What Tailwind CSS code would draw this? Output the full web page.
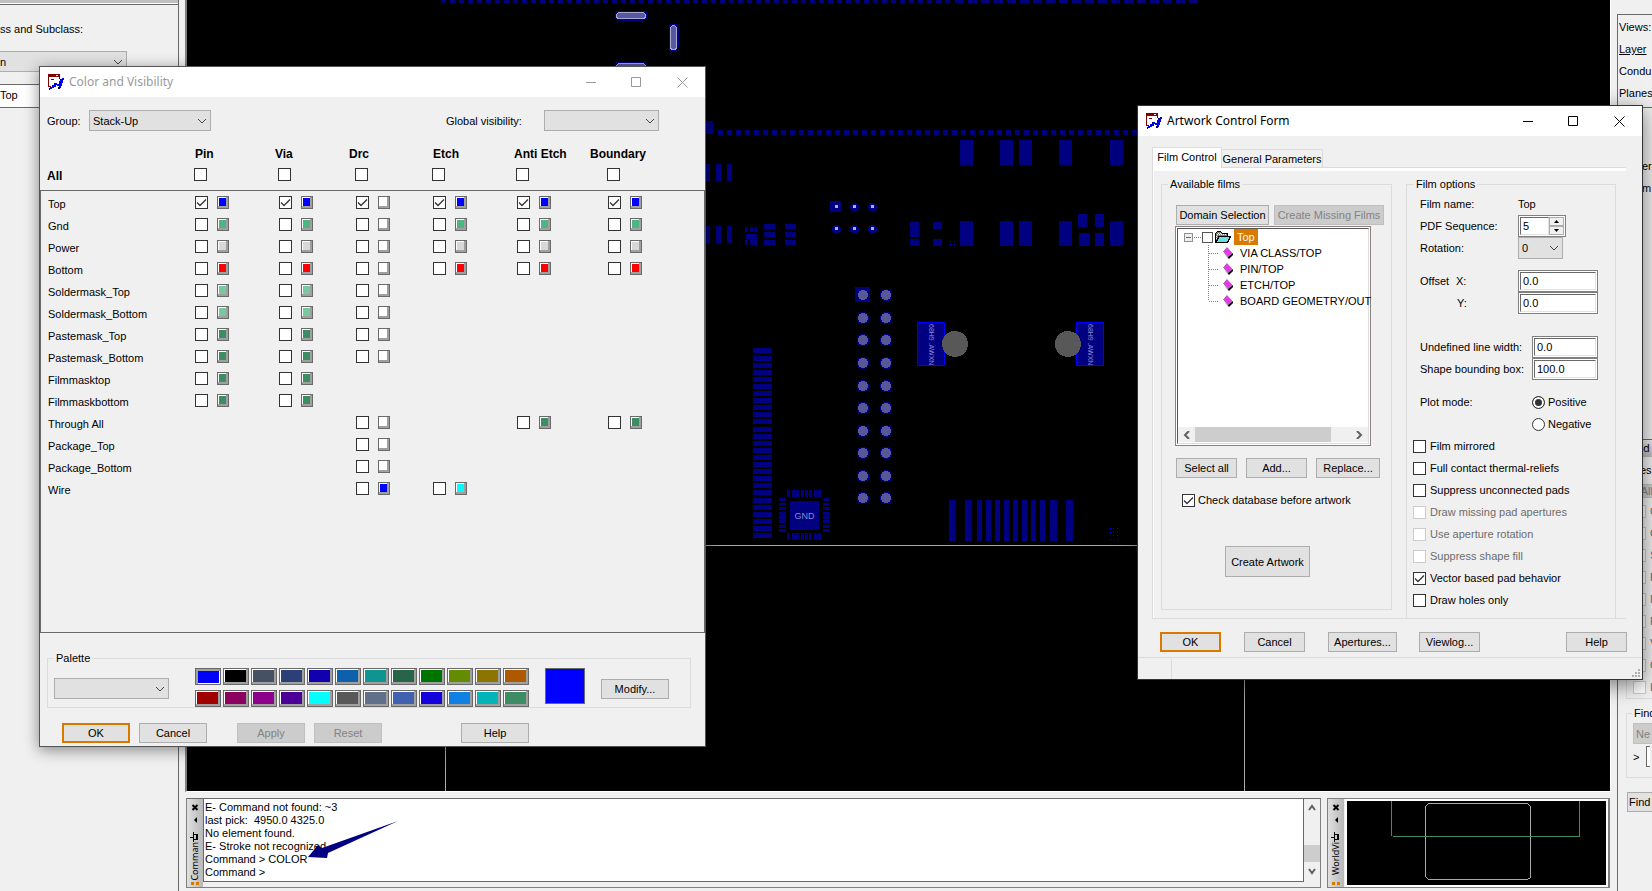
<!DOCTYPE html>
<html lang="en">
<head>
<meta charset="utf-8">
<meta name="viewport" content="width=device-width, initial-scale=1">
<title>PCB Editor</title>
<script src="https://cdn.jsdelivr.net/npm/@tailwindcss/browser@4"></script>
</head>
<body class="relative flex h-screen overflow-hidden whitespace-nowrap bg-[#f0f0f0] font-['Liberation_Sans',sans-serif] text-[11px] leading-[14px] text-black">

<!-- Options panel -->
<aside class="flex w-[179px] shrink-0 flex-col border-r border-[#696969]">
  <div class="h-[4px] border-b border-white bg-[#c0c0c0]"></div>
  <div class="border-t border-[#696969] pt-[17px]">
    <label for="cls" class="block">ss and Subclass:</label>
    <div class="relative mt-[15px] w-[127px]">
      <select id="cls" class="h-[21px] w-full appearance-none border border-l-0 border-[#adadad] bg-[#e1e1e1] text-black"><option>n</option></select>
      <svg class="pointer-events-none absolute right-1 top-[7px] h-2 w-[10px]" viewBox="0 0 10 8" fill="none" stroke="#444"><path d="M1 2l4 4 4-4"/></svg>
    </div>
    <div class="mt-3 h-6 border-y border-[#696969] bg-white pt-[3px]">Top</div>
  </div>
</aside>

<main class="flex min-w-0 flex-1 flex-col">
  <!-- Design canvas -->
  <section class="mx-[6px] min-h-0 flex-1 border-b border-l-2 border-r border-b-white border-l-[#808080] border-r-white bg-black">
    <svg id="board" class="block h-full w-full" viewBox="187 0 1423 791" preserveAspectRatio="xMinYMin slice" shape-rendering="crispEdges" fill="#000080"></svg>
  </section>

  <div class="flex h-[99px] shrink-0 gap-[6px] px-[7px] pb-[3px] pt-[6px]">
    <!-- Command panel -->
    <section class="flex min-w-0 flex-1 border border-[#808080] border-t-[#696969] bg-[#f0f0f0]">
      <div class="flex w-4 shrink-0 flex-col items-center bg-linear-to-r from-[#e0e0e0] to-[#b8b8b8] pt-[5px]">
        <svg class="h-[38px] w-[14px] shrink-0" viewBox="0 0 14 38" fill="none" stroke="#000"><path stroke-width="2" d="M4.500 1l5 5M9.500 1l-5 5"/><path fill="#000" stroke="none" d="M9 13v6l-3-3z"/><path shape-rendering="crispEdges" d="M5 30.500h5M5 35.500h5M9.500 30v6M8.500 30v6M5.500 28v10M2 33.500h3"/></svg>
        <div class="rotate-180 font-['Noto_Sans'] text-[9px] leading-3 [writing-mode:vertical-rl]">Comman</div>
        <svg class="mb-[2px] mt-auto h-[3px] w-2 shrink-0" viewBox="0 0 8 3" fill="#d97900"><path d="M0 0h3v3H0zM5 0h3v3H5z"/></svg>
      </div>
      <div class="mb-[5px] min-w-0 flex-1 border border-t-0 border-[#696969] bg-white pl-px pt-[2px] leading-[13px]">
        <p>E- Command not found: ~3</p>
        <p>last pick: &nbsp;4950.0 4325.0</p>
        <p>No element found.</p>
        <p>E- Stroke not recognized.</p>
        <p>Command &gt; COLOR</p>
        <p>Command &gt;</p>
      </div>
      <div class="flex w-4 flex-col items-center pb-3 pt-[5px]">
        <svg class="h-[7px] w-2" viewBox="0 0 8 7" fill="none" stroke="#606060" stroke-width="2"><path d="M1 6l3-4 3 4"/></svg>
        <span class="mb-[6px] mt-auto h-[17px] w-full bg-[#cdcdcd]"></span>
        <svg class="h-[7px] w-2" viewBox="0 0 8 7" fill="none" stroke="#606060" stroke-width="2"><path d="M1 1l3 4 3-4"/></svg>
      </div>
    </section>
    <!-- WorldView panel -->
    <section class="flex w-[283px] shrink-0 border border-r-2 border-[#808080]">
      <div class="flex w-[17px] shrink-0 flex-col items-center border-r border-[#f0f0f0] bg-linear-to-r from-[#e0e0e0] to-[#b8b8b8] pt-[5px]">
        <svg class="h-[38px] w-[14px] shrink-0" viewBox="0 0 14 38" fill="none" stroke="#000"><path stroke-width="2" d="M4.500 1l5 5M9.500 1l-5 5"/><path fill="#000" stroke="none" d="M9 13v6l-3-3z"/><path shape-rendering="crispEdges" d="M5 30.500h5M5 35.500h5M9.500 30v6M8.500 30v6M5.500 28v10M2 33.500h3"/></svg>
        <div class="rotate-180 font-['Noto_Sans'] text-[9px] leading-3 [writing-mode:vertical-rl]">WorldVi</div>
        <svg class="mb-[2px] mt-auto h-[3px] w-2 shrink-0" viewBox="0 0 8 3" fill="#d97900"><path d="M0 0h3v3H0zM5 0h3v3H5z"/></svg>
      </div>
      <div class="min-w-0 flex-1 border-2 border-white bg-black">
        <svg class="block h-full w-full" viewBox="1348 801 261 84" preserveAspectRatio="xMinYMin slice" fill="none" shape-rendering="crispEdges"><path stroke="#a8a8a8" d="M1429.500 803.500h99l3 3v71l-3 2h-99l-3-3v-70z"/><path stroke="#3c8c64" d="M1392.500 801v35M1394 836.500h187M1580.500 801v35"/></svg>
      </div>
    </section>
  </div>
</main>

<!-- Visibility and Find panels -->
<aside class="flex w-[35px] shrink-0 flex-col">
  <div class="mt-[14px] h-[94px] border-b border-l border-t border-[#696969] pl-px pt-px leading-[22px]">
    <p>Views:</p><p><a href="#" class="underline">Layer</a></p><p>Condu</p><p>Planes</p>
  </div>
  <div class="flex-1 border-l border-[#696969]">
    <div class="pl-6 pt-[47px] leading-[22px]"><p>er</p><p>m</p></div>
    <div class="mt-[240px] border-t border-[#696969]">
      <div class="h-[17px] bg-linear-to-b from-[#f0f0f0] to-[#b8b8b8] pl-[25px] font-['Noto_Sans'] leading-4 text-black">d</div>
      <p class="mt-[6px] pl-[22px]">es</p>
      <button disabled class="ml-[15px] mt-[7px] block h-[14px] w-5 border border-r-0 border-[#bfbfbf] bg-[#ccc] text-right leading-3 text-[#838383]">All</button>
      <div id="findList" class="ml-2 border-b border-l border-[#dcdcdc] pl-[6px] pt-[2px] text-[#6d6d6d]"></div>
      <fieldset class="ml-2 mt-[7px] border border-r-0 border-[#dcdcdc] pl-[6px]">
        <legend class="-ml-px px-[2px]">Find</legend>
        <button disabled class="mt-[3px] block h-[21px] w-full border border-r-0 border-[#bfbfbf] bg-[#ccc] pl-[2px] text-left text-[#838383]">Ne</button>
        <div class="mb-[10px] mt-[2px] flex h-[21px] items-center"><span>&gt;</span><input aria-label="Find name" class="ml-[7px] h-[21px] w-1 border border-r-0 border-[#696969] bg-white"></div>
      </fieldset>
      <button class="ml-[9px] mt-[14px] h-5 w-[25px] border border-r-0 border-[#adadad] bg-[#e1e1e1] pl-px text-left">Find</button>
    </div>
  </div>
</aside>

<!-- Pointer to the COLOR command -->
<svg class="pointer-events-none absolute left-[300px] top-[815px] h-12 w-[110px]" viewBox="300 815 110 48" fill="#000080"><path d="M308 857l10-12 4 3 76-27-70 32-1 5z"/></svg>

<!-- Color and Visibility -->
<section class="absolute left-[39px] top-[66px] w-[667px] border border-[#555] bg-[#f0f0f0] shadow-[0_3px_14px_rgba(0,0,0,0.45)]">
  <header class="flex h-[30px] items-center bg-white pl-2">
    <svg class="size-4" viewBox="0 0 16 16" shape-rendering="crispEdges"><use href="#appicon"/></svg>
    <h1 class="ml-[5px] flex-1 font-['Noto_Sans'] text-[12px] text-[#999]">Color and Visibility</h1>
    <button aria-label="Minimize" class="w-[46px]"><svg class="mx-auto size-[11px]" viewBox="0 0 11 11" fill="none" stroke="#999"><path d="M0 5.500h10"/></svg></button>
    <button aria-label="Maximize" class="w-[45px]"><svg class="mx-auto size-[11px]" viewBox="0 0 11 11" fill="none" stroke="#999"><path d="M.5.5h9v9h-9z"/></svg></button>
    <button aria-label="Close" class="w-[46px]"><svg class="mx-auto size-[11px]" viewBox="0 0 11 11" fill="none" stroke="#999"><path d="M.5.5l10 10M10.500.5l-10 10"/></svg></button>
  </header>
  <div class="flex items-center pl-[7px] pr-[46px] pt-[13px]">
    <label for="grp" class="w-[42px]">Group:</label>
    <div class="relative w-[122px]">
      <select id="grp" class="block h-[21px] w-full appearance-none border border-[#adadad] bg-[#e1e1e1] pl-[3px]"><option>Stack-Up</option></select>
      <svg class="pointer-events-none absolute right-1 top-[7px] h-2 w-[10px]" viewBox="0 0 10 8" fill="none" stroke="#444"><path d="M1 2l4 4 4-4"/></svg>
    </div>
    <label for="gv" class="ml-auto w-[98px]">Global visibility:</label>
    <div class="relative w-[115px]">
      <select id="gv" class="block h-[21px] w-full appearance-none border border-[#adadad] bg-[#e1e1e1]"><option></option></select>
      <svg class="pointer-events-none absolute right-1 top-[7px] h-2 w-[10px]" viewBox="0 0 10 8" fill="none" stroke="#444"><path d="M1 2l4 4 4-4"/></svg>
    </div>
  </div>
  <div class="mt-[15px] flex h-4 items-center pl-[155px] text-[12px] font-bold">
    <span class="w-20">Pin</span><span class="w-[74px]">Via</span><span class="w-[84px]">Drc</span><span class="w-[81px]">Etch</span><span class="w-[76px]">Anti Etch</span><span>Boundary</span>
  </div>
  <div class="mt-[6px] flex h-[13px] items-center pl-[7px]">
    <span class="w-[147px] pt-[3px] text-[12px] font-bold">All</span>
    <div id="allRow" class="flex"></div>
  </div>
  <div class="mt-[9px] h-[443px] border border-[#696969]">
    <table class="w-full table-fixed border-collapse">
      <colgroup><col class="w-[154px]"><col class="w-[84px]"><col class="w-[77px]"><col class="w-[77px]"><col class="w-[84px]"><col class="w-[91px]"><col></colgroup>
      <tbody id="layers"></tbody>
    </table>
  </div>
  <fieldset class="ml-[7px] mr-[14px] mt-[18px] border border-[#dcdcdc]">
    <legend class="ml-[6px] px-[2px]">Palette</legend>
    <div class="flex items-start pl-[6px] pt-[3px]">
      <div class="relative mt-[10px] w-[115px]">
        <select aria-label="Palette" class="block h-[21px] w-full appearance-none border border-[#adadad] bg-[#e1e1e1]"><option></option></select>
        <svg class="pointer-events-none absolute right-1 top-[7px] h-2 w-[10px]" viewBox="0 0 10 8" fill="none" stroke="#444"><path d="M1 2l4 4 4-4"/></svg>
      </div>
      <div id="palette" class="ml-[26px] grid grid-cols-[repeat(12,26px)] gap-x-[2px] gap-y-[5px]"></div>
      <span class="ml-4 h-9 w-10 border border-[#696969] bg-[#0000ff]"></span>
      <button class="ml-4 mt-[11px] h-5 w-[68px] border border-[#adadad] bg-[#e1e1e1]">Modify...</button>
    </div>
  </fieldset>
  <footer class="flex pb-[3px] pl-[22px] pt-[15px]">
    <button class="h-5 w-[68px] border-2 border-[#d97900] bg-[#e1e1e1] leading-4">OK</button>
    <button class="ml-[9px] h-5 w-[68px] border border-[#adadad] bg-[#e1e1e1]">Cancel</button>
    <button disabled class="ml-[30px] h-5 w-[68px] border border-[#bfbfbf] bg-[#ccc] text-[#838383]">Apply</button>
    <button disabled class="ml-[9px] h-5 w-[68px] border border-[#bfbfbf] bg-[#ccc] text-[#838383]">Reset</button>
    <button class="ml-[79px] h-5 w-[68px] border border-[#adadad] bg-[#e1e1e1]">Help</button>
  </footer>
</section>

<!-- Artwork Control Form -->
<section class="absolute left-[1137px] top-[105px] w-[506px] border border-[#333] bg-[#f0f0f0] shadow-[0_5px_20px_rgba(0,0,0,0.5)]">
  <header class="flex h-[30px] items-center bg-white pl-2">
    <svg class="size-4" viewBox="0 0 16 16" shape-rendering="crispEdges"><use href="#appicon"/></svg>
    <h1 class="ml-[5px] flex-1 font-['Noto_Sans'] text-[12px]">Artwork Control Form</h1>
    <button aria-label="Minimize" class="w-[46px]"><svg class="mx-auto size-[11px]" viewBox="0 0 11 11" fill="none" stroke="#000"><path d="M0 5.500h10"/></svg></button>
    <button aria-label="Maximize" class="w-[45px]"><svg class="mx-auto size-[11px]" viewBox="0 0 11 11" fill="none" stroke="#000"><path d="M.5.5h9v9h-9z"/></svg></button>
    <button aria-label="Close" class="w-[46px]"><svg class="mx-auto size-[11px]" viewBox="0 0 11 11" fill="none" stroke="#000"><path d="M.5.5l10 10M10.500.5l-10 10"/></svg></button>
  </header>
  <div class="ml-[14px] mr-4 pt-[11px]">
    <div role="tablist" class="flex h-5 items-end">
      <button role="tab" aria-selected="true" class="relative z-10 -mb-px h-[21px] w-[70px] border border-b-0 border-[#dcdcdc] bg-white pb-[2px]">Film Control</button>
      <button role="tab" aria-selected="false" class="h-[18px] w-[101px] border border-b-0 border-l-0 border-[#dcdcdc]">General Parameters</button>
    </div>
    <div class="flex items-start border-b border-l border-t border-[#dcdcdc]">
      <div class="flex flex-1 items-start border-l border-t-[3px] border-white pl-[7px] pt-[6px]">
        <fieldset class="h-[433px] w-[231px] border border-[#dcdcdc] pl-[13px]">
          <legend class="ml-[-7px] px-[2px]">Available films</legend>
          <div class="flex gap-[5px] pl-px pt-[14px]">
            <button class="h-5 w-[93px] border border-[#adadad] bg-[#e1e1e1]">Domain Selection</button>
            <button disabled class="h-5 w-[110px] border border-[#bfbfbf] bg-[#ccc] text-[#838383]">Create Missing Films</button>
          </div>
          <div class="mt-px h-[220px] w-[196px] border border-[#8c8080] bg-white p-px">
            <div class="flex h-full flex-col border border-[#dcdcdc] border-l-[#555] border-t-[#555]">
              <div class="flex h-4 items-center pl-[6px]">
                <svg class="h-[11px] w-[17px]" viewBox="0 0 17 11" fill="none" shape-rendering="crispEdges"><path fill="#eee" stroke="#919191" d="M.5 1.500h8v8h-8z"/><path stroke="#d0403c" d="M2 5.500h5"/><path stroke="#808080" stroke-dasharray="1 1" d="M10 5.500h7"/></svg>
                <input type="checkbox" aria-label="Top film" class="ml-px size-[11px] appearance-none border border-[#555] bg-white">
                <svg class="ml-[2px] h-3 w-4" viewBox="0 0 16 12" shape-rendering="crispEdges"><path fill="#808080" stroke="#000" d="M.5 11.500v-9l2-2h3l2 2h5v3"/><path fill="#fff" d="M2 3h1v1H2zM4 3h1v1H4zM6 3h1v1H6zM8 3h1v1H8zM10 3h1v1h-1zM1 5h1v1H1zM1 7h1v1H1zM3 2h1v1H3zM5 2h1v1H5z"/><path fill="#6ce0e0" stroke="#000" d="M1 11.500l3-6h11.500l-3 6z"/></svg>
                <span class="ml-[3px] h-4 bg-[#d97900] px-[3px] leading-4 text-white">Top</span>
              </div>
              <ul id="tree"></ul>
              <div class="mb-px mt-auto flex h-[15px] items-center bg-[#f0f0f0] px-[5px]">
                <svg class="h-2 w-[7px]" viewBox="0 0 7 8" fill="none" stroke="#606060" stroke-width="2"><path d="M6 0L2 4l4 4"/></svg>
                <span class="ml-[5px] h-full w-[136px] bg-[#cdcdcd]"></span>
                <svg class="ml-auto h-2 w-[7px]" viewBox="0 0 7 8" fill="none" stroke="#606060" stroke-width="2"><path d="M1 0l4 4-4 4"/></svg>
              </div>
            </div>
          </div>
          <div class="mt-3 flex gap-[9px] pl-px">
            <button class="h-5 w-[61px] border border-[#adadad] bg-[#e1e1e1]">Select all</button>
            <button class="h-5 w-[61px] border border-[#adadad] bg-[#e1e1e1]">Add...</button>
            <button class="h-5 w-16 border border-[#adadad] bg-[#e1e1e1]">Replace...</button>
          </div>
          <div id="dbCheck" class="mt-[15px] pl-[7px]"></div>
          <button class="ml-[50px] mt-[39px] block h-[31px] w-[85px] border border-[#adadad] bg-[#e1e1e1]">Create Artwork</button>
        </fieldset>
        <fieldset class="ml-[14px] w-[210px] border border-b-0 border-[#dcdcdc] pb-[7px] pt-[2px] [&_p]:flex [&_p]:h-[22px] [&_p]:items-center [&_p]:pl-[13px]">
          <legend class="ml-[7px] px-[2px]">Film options</legend>
          <p><span class="w-[98px]">Film name:</span>Top</p>
          <p><label for="seq" class="w-[98px]">PDF Sequence:</label>
            <span class="flex h-[22px] w-[48px] border border-[#808080] bg-white p-px">
              <input id="seq" value="5" class="w-[29px] border border-[#e3e3e3] border-l-[#696969] border-t-[#696969] pl-[2px]">
              <span class="flex flex-1 flex-col">
                <button aria-label="Increase" class="flex flex-1 items-center justify-center border border-[#adadad] bg-[#f0f0f0]"><svg class="h-[3px] w-[5px]" viewBox="0 0 5 3"><path d="M0 3l2.500-3L5 3z"/></svg></button>
                <button aria-label="Decrease" class="flex flex-1 items-center justify-center border border-[#adadad] bg-[#f0f0f0]"><svg class="h-[3px] w-[5px]" viewBox="0 0 5 3"><path d="M0 0l2.500 3L5 0z"/></svg></button>
              </span>
            </span></p>
          <p><label for="rot" class="w-[98px]">Rotation:</label>
            <span class="relative w-[45px]"><select id="rot" class="block h-[22px] w-full appearance-none border border-[#adadad] bg-[#e1e1e1] pl-[3px]"><option>0</option></select><svg class="pointer-events-none absolute right-1 top-[7px] h-2 w-[10px]" viewBox="0 0 10 8" fill="none" stroke="#444"><path d="M1 2l4 4 4-4"/></svg></span></p>
          <p class="mt-[11px]"><span class="w-9">Offset</span><label for="ox" class="w-[62px]">X:</label><span class="h-[22px] w-20 border border-[#808080] bg-white p-px"><input id="ox" value="0.0" class="block h-[18px] w-full border border-[#e3e3e3] border-l-[#696969] border-t-[#696969] pl-[2px]"></span></p>
          <p><label for="oy" class="w-[98px] pl-[37px]">Y:</label><span class="h-[22px] w-20 border border-[#808080] bg-white p-px"><input id="oy" value="0.0" class="block h-[18px] w-full border border-[#e3e3e3] border-l-[#696969] border-t-[#696969] pl-[2px]"></span></p>
          <p class="mt-[22px]"><label for="ulw" class="w-28">Undefined line width:</label><span class="h-[22px] w-[66px] border border-[#808080] bg-white p-px"><input id="ulw" value="0.0" class="block h-[18px] w-full border border-[#e3e3e3] border-l-[#696969] border-t-[#696969] pl-[2px]"></span></p>
          <p><label for="sbb" class="w-28">Shape bounding box:</label><span class="h-[22px] w-[66px] border border-[#808080] bg-white p-px"><input id="sbb" value="100.0" class="block h-[18px] w-full border border-[#e3e3e3] border-l-[#696969] border-t-[#696969] pl-[2px]"></span></p>
          <p class="mt-[11px]"><span class="w-28">Plot mode:</span><label class="flex items-center gap-[3px]"><input type="radio" name="plot" checked class="size-[13px] appearance-none rounded-full border border-[#333] bg-white shadow-[inset_0_0_0_2px_#fff] checked:bg-[#333]">Positive</label></p>
          <p><label class="ml-28 flex items-center gap-[3px]"><input type="radio" name="plot" class="size-[13px] appearance-none rounded-full border border-[#333] bg-white">Negative</label></p>
          <div id="filmChecks" class="pl-[6px]"></div>
        </fieldset>
      </div>
    </div>
  </div>
  <footer>
    <div class="flex pb-[5px] pl-[22px] pr-[15px] pt-[13px]">
      <button class="h-5 w-[61px] border-2 border-[#d97900] bg-[#e1e1e1] leading-4">OK</button>
      <button class="ml-[23px] h-5 w-[61px] border border-[#adadad] bg-[#e1e1e1]">Cancel</button>
      <button class="ml-[23px] h-5 w-[69px] border border-[#adadad] bg-[#e1e1e1]">Apertures...</button>
      <button class="ml-[22px] h-5 w-[61px] border border-[#adadad] bg-[#e1e1e1]">Viewlog...</button>
      <button class="ml-auto h-5 w-[61px] border border-[#adadad] bg-[#e1e1e1]">Help</button>
    </div>
    <div class="flex h-[22px] items-end justify-between border-t border-[#dcdcdc] pr-[2px]">
      <span class="h-5 w-[34px] border-r border-[#dcdcdc]"></span>
      <svg class="mb-[2px] size-2" viewBox="0 0 8 8" fill="#b0b0b0" shape-rendering="crispEdges"><path d="M6 0h2v2H6zM3 3h2v2H3zM6 3h2v2H6zM0 6h2v2H0zM3 6h2v2H3zM6 6h2v2H6z"/></svg>
    </div>
  </footer>
</section>

<svg class="hidden"><defs><g id="appicon">
  <path fill="#fff" d="M1 3h10v9H1z"/><path fill="#800000" d="M0 0h12v5h-1V3H1v9h2v1H0zM3 5h3v1H3z"/><path fill="#fff" d="M8 1h2v1H8z"/>
  <path fill="#0000f0" d="M14 4h2v2h-1v3h-1v3h-1v2h-2v-2H9v-1H8v2H6v1H4v1H2v1H1v-2h1v-1h2v-2h2V9h3v1h2V7h1V5h2z"/><path fill="#000060" d="M10 13h2v2h-2zM1 14h1v2H1zM12 5h1v1h-1zM6 9h1v1H6z"/>
</g></defs></svg>

<script>
const $ = id => document.getElementById(id);

const box = (name, on, off) => `<span class="relative inline-block size-[13px] shrink-0"><input type="checkbox" ${name} ${on ? 'checked' : ''} ${off ? 'disabled' : ''} class="peer block size-[13px] appearance-none border border-[#333] bg-white disabled:border-[#ccc]"><svg class="pointer-events-none absolute inset-0 hidden size-[13px] peer-checked:block" viewBox="0 0 13 13" fill="none" stroke="#333" stroke-width="1.3"><path d="M2 6.500l3 3 6-6"/></svg></span>`;
const check = (id, text, on, off) => `<div class="flex h-[22px] items-center gap-1 ${off ? 'text-[#6d6d6d]' : ''}">${box(`id="${id}"`, on, off)}<label for="${id}">${text}</label></div>`;

/* Layer table: one swatch colour per column, null where a layer lacks the class */
const B = '#0000ff', G = '#50b482', P = '#d8d8d8', R = '#ff0000', S = '#78c8a0', K = '#3c8c64', W = '#ffffff', C = '#00ffff', _ = null;
const cols = ['Pin', 'Via', 'Drc', 'Etch', 'Anti Etch', 'Boundary'];
const layers = [
  ['Top', B, B, W, B, B, B], ['Gnd', G, G, W, G, G, G], ['Power', P, P, W, P, P, P], ['Bottom', R, R, W, R, R, R],
  ['Soldermask_Top', S, S, W, _, _, _], ['Soldermask_Bottom', S, S, W, _, _, _],
  ['Pastemask_Top', K, K, W, _, _, _], ['Pastemask_Bottom', K, K, W, _, _, _],
  ['Filmmasktop', K, K, _, _, _, _], ['Filmmaskbottom', K, K, _, _, _, _],
  ['Through All', _, _, W, _, K, K], ['Package_Top', _, _, W, _, _, _], ['Package_Bottom', _, _, W, _, _, _],
  ['Wire', _, _, B, C, _, _]
];
$('layers').innerHTML = layers.map(([n, ...cs]) => `<tr class="h-[22px]"><th scope="row" class="p-0 pl-[7px] pt-[3px] text-left font-normal">${n}</th>${cs.map((c, i) => `<td class="p-0">${c ? `<div class="flex gap-[9px]">${box(`aria-label="${n} ${cols[i]}"`, n === 'Top')}<button aria-label="${n} ${cols[i]} color" class="flex h-[13px] w-3 items-start border border-[#696969] bg-[#a0a0a0]"><span class="block h-[9px] w-2 border-l border-t border-white" style="background:${c}"></span></button></div>` : ''}</td>`).join('')}</tr>`).join('');
$('allRow').innerHTML = cols.map((c, i) => `<span class="${['w-[84px]', 'w-[77px]', 'w-[77px]', 'w-[84px]', 'w-[91px]', 'w-5'][i]} flex">${box(`aria-label="All ${c}"`)}</span>`).join('');

const palette = ['#0000ff', '#000000', '#465264', '#2c4078', '#1000b0', '#0c60ac', '#109490', '#286448', '#007400', '#648c00', '#8c7400', '#b05800',
  '#a00000', '#8c0060', '#8c008c', '#4c0098', '#00ffff', '#585858', '#607088', '#4060b0', '#1400dc', '#1080e4', '#00b4b8', '#3c8c64'];
$('palette').innerHTML = palette.map((c, i) => `<button aria-label="Color ${i + 1}" class="h-[17px] w-[26px] border border-[#696969] ${i ? 'bg-[#a0a0a0] pb-[2px] pr-[2px]' : 'bg-[#a0a0a0] pl-[2px] pt-[2px]'}"><span class="block h-full w-full border-white ${i ? 'border-l border-t' : 'border-b border-r'}" style="background:${c}"></span></button>`).join('');

$('tree').innerHTML = ['VIA CLASS/TOP', 'PIN/TOP', 'ETCH/TOP', 'BOARD GEOMETRY/OUT'].map((t, i) => `<li class="flex h-4 items-center pl-[30px]"><svg class="h-4 w-[11px] shrink-0" viewBox="0 0 11 16" stroke="#808080" stroke-dasharray="1 1" shape-rendering="crispEdges"><path d="${i < 3 ? 'M.5 0v16M1 8.500h10' : 'M.5 0v8M1 8.500h10'}"/></svg><svg class="ml-1 h-3 w-[10px] shrink-0" viewBox="0 0 10 12"><path fill="#000" d="M0 5l6 7 4-4V6L5 10z"/><path fill="#e838e8" stroke="#803080" stroke-width=".5" d="M4 .5L9 6 5.500 9.500.5 4.500z"/></svg><span class="ml-[7px]">${t}</span></li>`).join('');
$('dbCheck').innerHTML = `<div class="flex items-center gap-[3px]">${box('id="db"', true)}<label for="db">Check database before artwork</label></div>`;
$('filmChecks').innerHTML = check('f1', 'Film mirrored') + check('f2', 'Full contact thermal-reliefs') + check('f3', 'Suppress unconnected pads') + check('f4', 'Draw missing pad apertures', 0, 1) + check('f5', 'Use aperture rotation', 0, 1) + check('f6', 'Suppress shape fill', 0, 1) + check('f7', 'Vector based pad behavior', 1) + check('f8', 'Draw holes only');
$('findList').innerHTML = [...'CCSPNPV', 'C', 'L'].map((t, i) => check('n' + i, t, 0, 1)).join('');

/* Board artwork, in canvas coordinates */
const r = (x, y, w, h, a = '') => `<rect x="${x}" y="${y}" width="${w}" height="${h}" ${a}/>`;
const c = (x, y, rad, a = '') => `<circle cx="${x}" cy="${y}" r="${rad}" ${a}/>`;
let s = '';
for (let x = 441; x < 950; x += 9) s += r(x, 0, 5, 3);
for (let i = 0; i < 19; i++) s += r(Math.round(955 + i * 13), 0, 9, 3);
for (let x = 718; x < 1138; x += 9) s += r(x, 130, 5, 5);
s += r(705, 121, 8, 13);
for (const y of [164, 226]) for (const x of [705, 716, 727]) s += r(x, y, 5, 17);
for (const y of [140, 221]) for (const x of [960, 1000, 1019, 1059, 1110]) s += r(x, y, 13, 25);
for (const y of [227, 240]) for (const x of [745, 750, 754]) s += r(x, y, 3, 5);
s += r(746, 234, 11, 5);
for (const x of [764, 785]) for (const y of [224, 232, 240]) s += r(x, y, 11, 5);
s += r(830, 201, 11, 11);
for (const y of [207, 229]) for (const x of [836, 854, 872]) s += (x > 836 || y > 207 ? c(x + .5, y, 4.5) : '') + r(x - 1, y - 2, 3, 3, 'fill="#b0b0c0"');
for (const [x, y] of [[910, 222], [910, 230], [910, 239], [933, 222], [933, 239]]) s += r(x, y, 9, 7);
for (const x of [950, 954]) for (const y of [241, 244]) s += r(x, y, 1, 1, 'fill="#0000ff"');
for (const [x, y, w] of [[1078, 214, 9], [1095, 214, 9], [1079, 233, 11], [1095, 233, 9]]) s += r(x, y, w, 13);
s += r(855, 287, 15, 15);
for (const y of [295, 318, 340, 363, 386, 408, 431, 453, 476, 498]) for (const x of [863, 886]) s += c(x, y, 6.5) + c(x, y, 5, 'fill="#585898"');
[348, 356, 363, 370, 377, 384, 391, 398, 405, 412, 419, 427, 434, 441, 448, 455, 462, 469, 476, 483, 490, 498, 505, 512, 519, 526, 533].forEach(y => s += r(753, y, 19, 5));
s += r(790, 501, 29, 29);
for (const d of [0, 5, 9, 14, 18, 22, 27, 31]) s += r(787 + d, 490, 3, 7) + r(787 + d, 533, 3, 7) + r(779, 498 + d, 7, 3) + r(823, 498 + d, 7, 3);
s += '<text x="804.5" y="519" text-anchor="middle" fill="#8c8cd0" font-family="Liberation Sans" font-size="9">GND</text>';
for (const [x, cx] of [[917, 955], [1076, 1068]]) s += r(x + .5, 322.5, 27, 43, 'stroke="#0000ff"') + `<text x="${x + 12}" y="324" transform="rotate(90 ${x + 12} 324)" fill="#8c8cd0" font-family="Liberation Sans" font-size="7">68H9 .AWXN</text>` + c(cx, 344, 13, 'fill="#585858"');
for (const [x, w] of [[949, 7], [965, 7], [977, 5], [986, 5], [995, 5], [1004, 5], [1013, 5], [1022, 5], [1031, 5], [1040, 5], [1050, 7], [1066, 7]]) s += r(x, 500, w, 41);
for (const x of [1110, 1113, 1117]) for (const y of [528, 532, 535, 539]) s += r(x, y, 1, 1, 'fill="#0000ff"');
for (const [x, y, w, h] of [[616, 12, 30, 7], [670, 25, 7, 25], [616, 63, 30, 7]]) s += r(x, y, w, h, 'rx="3" fill="#000080" stroke="#000080" stroke-width="3"') + r(x + .5, y + .5, w - 1, h - 1, 'rx="3" fill="#5858a0" stroke="#a8a8d0"');
s += '<path fill="none" stroke="#a8a8a8" d="M445.500 545.500h799V791M445.500 545v246"/>';
$('board').innerHTML = s;
</script>
</body>
</html>
